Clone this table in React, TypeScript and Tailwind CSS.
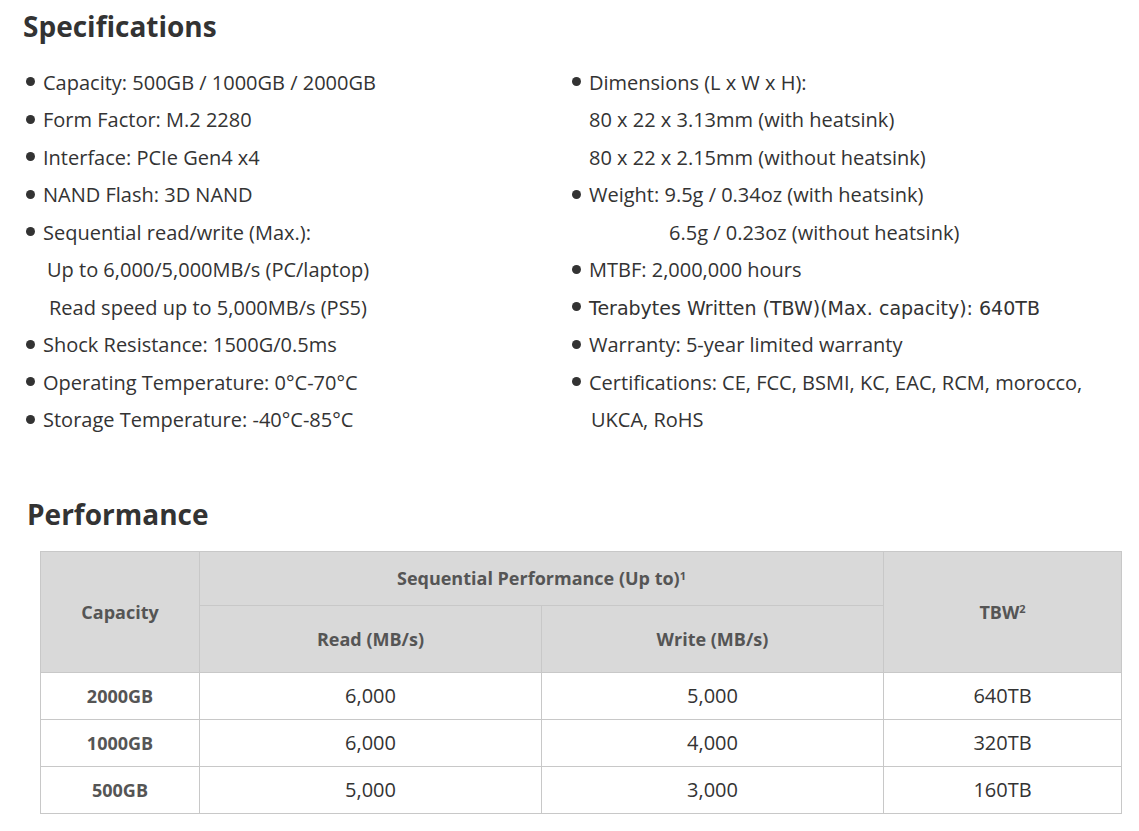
import React from "react";

const Dot = () => <span className="shrink-0 w-[9px] h-[9px] rounded-full bg-[#333] mr-[8px] mb-[2px]" />;

function Item({ children, indent }: { children: React.ReactNode; indent?: string }) {
  return <div className={`flex items-center h-[37.5px] whitespace-nowrap ${indent ?? ""}`}>{children}</div>;
}

export default function App() {
  const rows = [
    ["2000GB", "6,000", "5,000", "640TB"],
    ["1000GB", "6,000", "4,000", "320TB"],
    ["500GB", "5,000", "3,000", "160TB"],
  ];
  return (
    <div className="w-[1139px] h-[831px] bg-white text-[#333] font-['Open_Sans',sans-serif] overflow-hidden">
      <h1 className="pl-[23px] pt-[8px] text-[28px] font-bold leading-[36px] text-[#333]">Specifications</h1>
      <div className="flex pt-[20px] text-[20px]">
        <div className="w-[572px] pl-[26px]">
          <Item><Dot />Capacity: 500GB / 1000GB / 2000GB</Item>
          <Item><Dot />Form Factor: M.2 2280</Item>
          <Item><Dot />Interface: PCIe Gen4 x4</Item>
          <Item><Dot />NAND Flash: 3D NAND</Item>
          <Item><Dot />Sequential read/write (Max.):</Item>
          <Item indent="pl-[21px]">Up to 6,000/5,000MB/s (PC/laptop)</Item>
          <Item indent="pl-[23px]">Read speed up to 5,000MB/s (PS5)</Item>
          <Item><Dot />Shock Resistance: 1500G/0.5ms</Item>
          <Item><Dot />Operating Temperature: 0°C-70°C</Item>
          <Item><Dot />Storage Temperature: -40°C-85°C</Item>
        </div>
        <div className="flex-1">
          <Item><Dot />Dimensions (L x W x H):</Item>
          <Item indent="pl-[17px]">80 x 22 x 3.13mm (with heatsink)</Item>
          <Item indent="pl-[17px]">80 x 22 x 2.15mm (without heatsink)</Item>
          <Item><Dot />Weight: 9.5g / 0.34oz (with heatsink)</Item>
          <Item indent="pl-[97px]">6.5g / 0.23oz (without heatsink)</Item>
          <Item><Dot />MTBF: 2,000,000 hours</Item>
          <Item>
            <Dot />
            <span className="font-['DejaVu_Sans',sans-serif] text-[19px]">Terabytes Written (TBW)(Max. capacity): 640TB</span>
          </Item>
          <Item><Dot />Warranty: 5-year limited warranty</Item>
          <Item><Dot />Certifications: CE, FCC, BSMI, KC, EAC, RCM, morocco,</Item>
          <Item indent="pl-[19px]">UKCA, RoHS</Item>
        </div>
      </div>
      <h2 className="pl-[27px] pt-[57px] text-[28px] font-bold leading-[36px] text-[#333]">Performance</h2>
      <div className="pl-[40px] pt-[19px]">
        <table className="w-[1081px] border-collapse table-fixed text-center">
          <colgroup>
            <col className="w-[159px]" />
            <col className="w-[342px]" />
            <col className="w-[342px]" />
            <col className="w-[238px]" />
          </colgroup>
          <thead className="bg-[#d9d9d9] text-[#555] text-[18px] font-bold">
            <tr className="h-[54px]">
              <th rowSpan={2} className="border border-[#c8c8c8] font-bold">Capacity</th>
              <th colSpan={2} className="border border-[#c8c8c8] font-bold">
                Sequential Performance (Up to)<sup className="text-[11px]">1</sup>
              </th>
              <th rowSpan={2} className="border border-[#c8c8c8] font-bold">
                TBW<sup className="text-[11px]">2</sup>
              </th>
            </tr>
            <tr className="h-[67px]">
              <th className="border border-[#c8c8c8] font-bold">Read (MB/s)</th>
              <th className="border border-[#c8c8c8] font-bold">Write (MB/s)</th>
            </tr>
          </thead>
          <tbody>
            {rows.map((r) => (
              <tr key={r[0]} className="h-[47px]">
                <td className="border border-[#c8c8c8] text-[18px] font-bold text-[#555]">{r[0]}</td>
                <td className="border border-[#c8c8c8] text-[20px]">{r[1]}</td>
                <td className="border border-[#c8c8c8] text-[20px]">{r[2]}</td>
                <td className="border border-[#c8c8c8] text-[20px]">{r[3]}</td>
              </tr>
            ))}
          </tbody>
        </table>
      </div>
    </div>
  );
}
